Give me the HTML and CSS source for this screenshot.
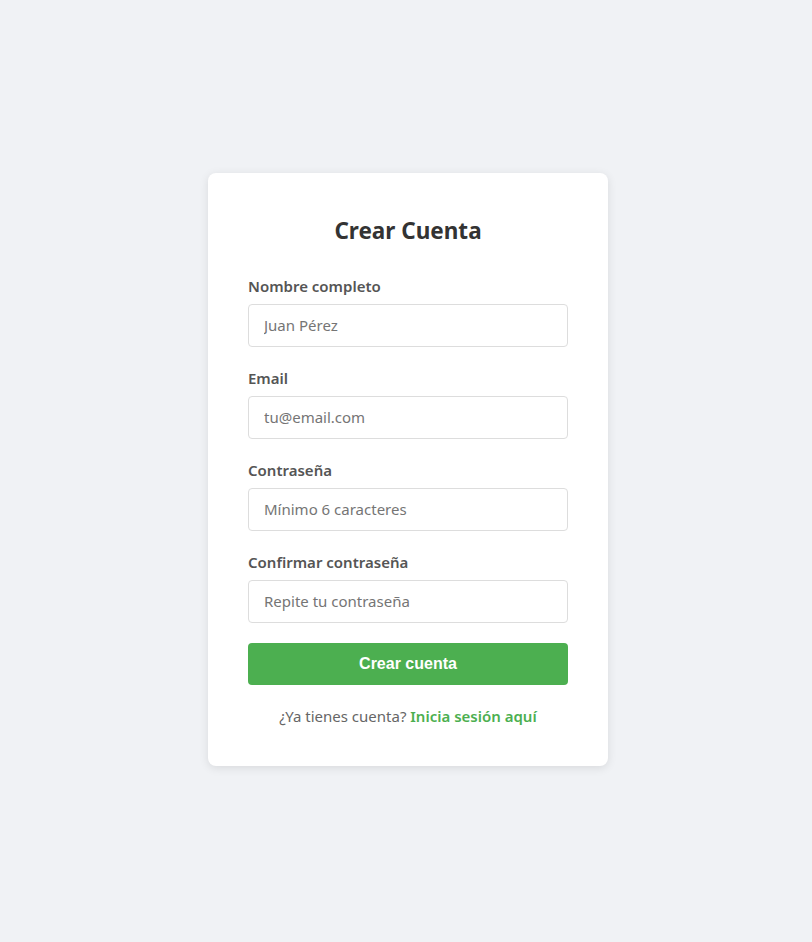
FILE: index.html
```html
<!DOCTYPE html>
<html lang="es">
<head>
<meta charset="utf-8">
<title>Crear Cuenta</title>
<link rel="stylesheet" href="styles.css">
</head>
<body>
<main class="page">
  <form class="card">
    <h2 class="title">Crear Cuenta</h2>
    <div class="group">
      <label class="label" for="name">Nombre completo</label>
      <input class="input" id="name" type="text" placeholder="Juan Pérez">
    </div>
    <div class="group">
      <label class="label" for="email">Email</label>
      <input class="input" id="email" type="email" placeholder="tu@email.com">
    </div>
    <div class="group">
      <label class="label" for="pass">Contraseña</label>
      <input class="input" id="pass" type="password" placeholder="Mínimo 6 caracteres">
    </div>
    <div class="group">
      <label class="label" for="pass2">Confirmar contraseña</label>
      <input class="input" id="pass2" type="password" placeholder="Repite tu contraseña">
    </div>
    <button class="btn" type="button">Crear cuenta</button>
    <p class="footer">¿Ya tienes cuenta? <a class="link" href="#">Inicia sesión aquí</a></p>
  </form>
</main>
</body>
</html>
```

FILE: styles.css
```css
* { box-sizing: border-box; }
html, body { margin: 0; padding: 0; }
body {
  background: #f0f2f5;
  font-family: "Noto Sans", "Open Sans", sans-serif;
}
.page {
  min-height: 942px;
  display: flex;
  align-items: center;
  justify-content: center;
  padding-left: 4px;
  padding-bottom: 4px;
}
.card {
  width: 400px;
  background: #fff;
  border-radius: 8px;
  box-shadow: 0 2px 10px rgba(0,0,0,0.1);
  padding: 40px;
}
.title {
  margin: 0 0 26px;
  text-align: center;
  font-size: 22.5px;
  line-height: 36px;
  font-weight: 700;
  color: #333;
}
.group { margin-bottom: 20px; }
.label {
  display: block;
  font-size: 15px;
  line-height: 20px;
  padding-top: 1px;
  font-weight: 600;
  color: #555;
  margin-bottom: 8px;
}
.input {
  display: block;
  width: 100%;
  height: 43px;
  padding: 0 15px;
  border: 1px solid #ddd;
  border-radius: 4px;
  font-family: inherit;
  font-size: 15px;
  color: #333;
  background: #fff;
}
.input::placeholder { color: #757575; }
.btn {
  display: block;
  width: 100%;
  height: 42px;
  border: 0;
  border-radius: 4px;
  background: #4caf50;
  color: #fff;
  font-family: "Liberation Sans", Arial, sans-serif;
  font-weight: 700;
  font-size: 16px;
}
.footer {
  margin: 21px 0 0;
  text-align: center;
  font-size: 15px;
  line-height: 20px;
  color: #666;
}
.link {
  color: #4caf50;
  font-weight: 600;
  text-decoration: none;
}
```
